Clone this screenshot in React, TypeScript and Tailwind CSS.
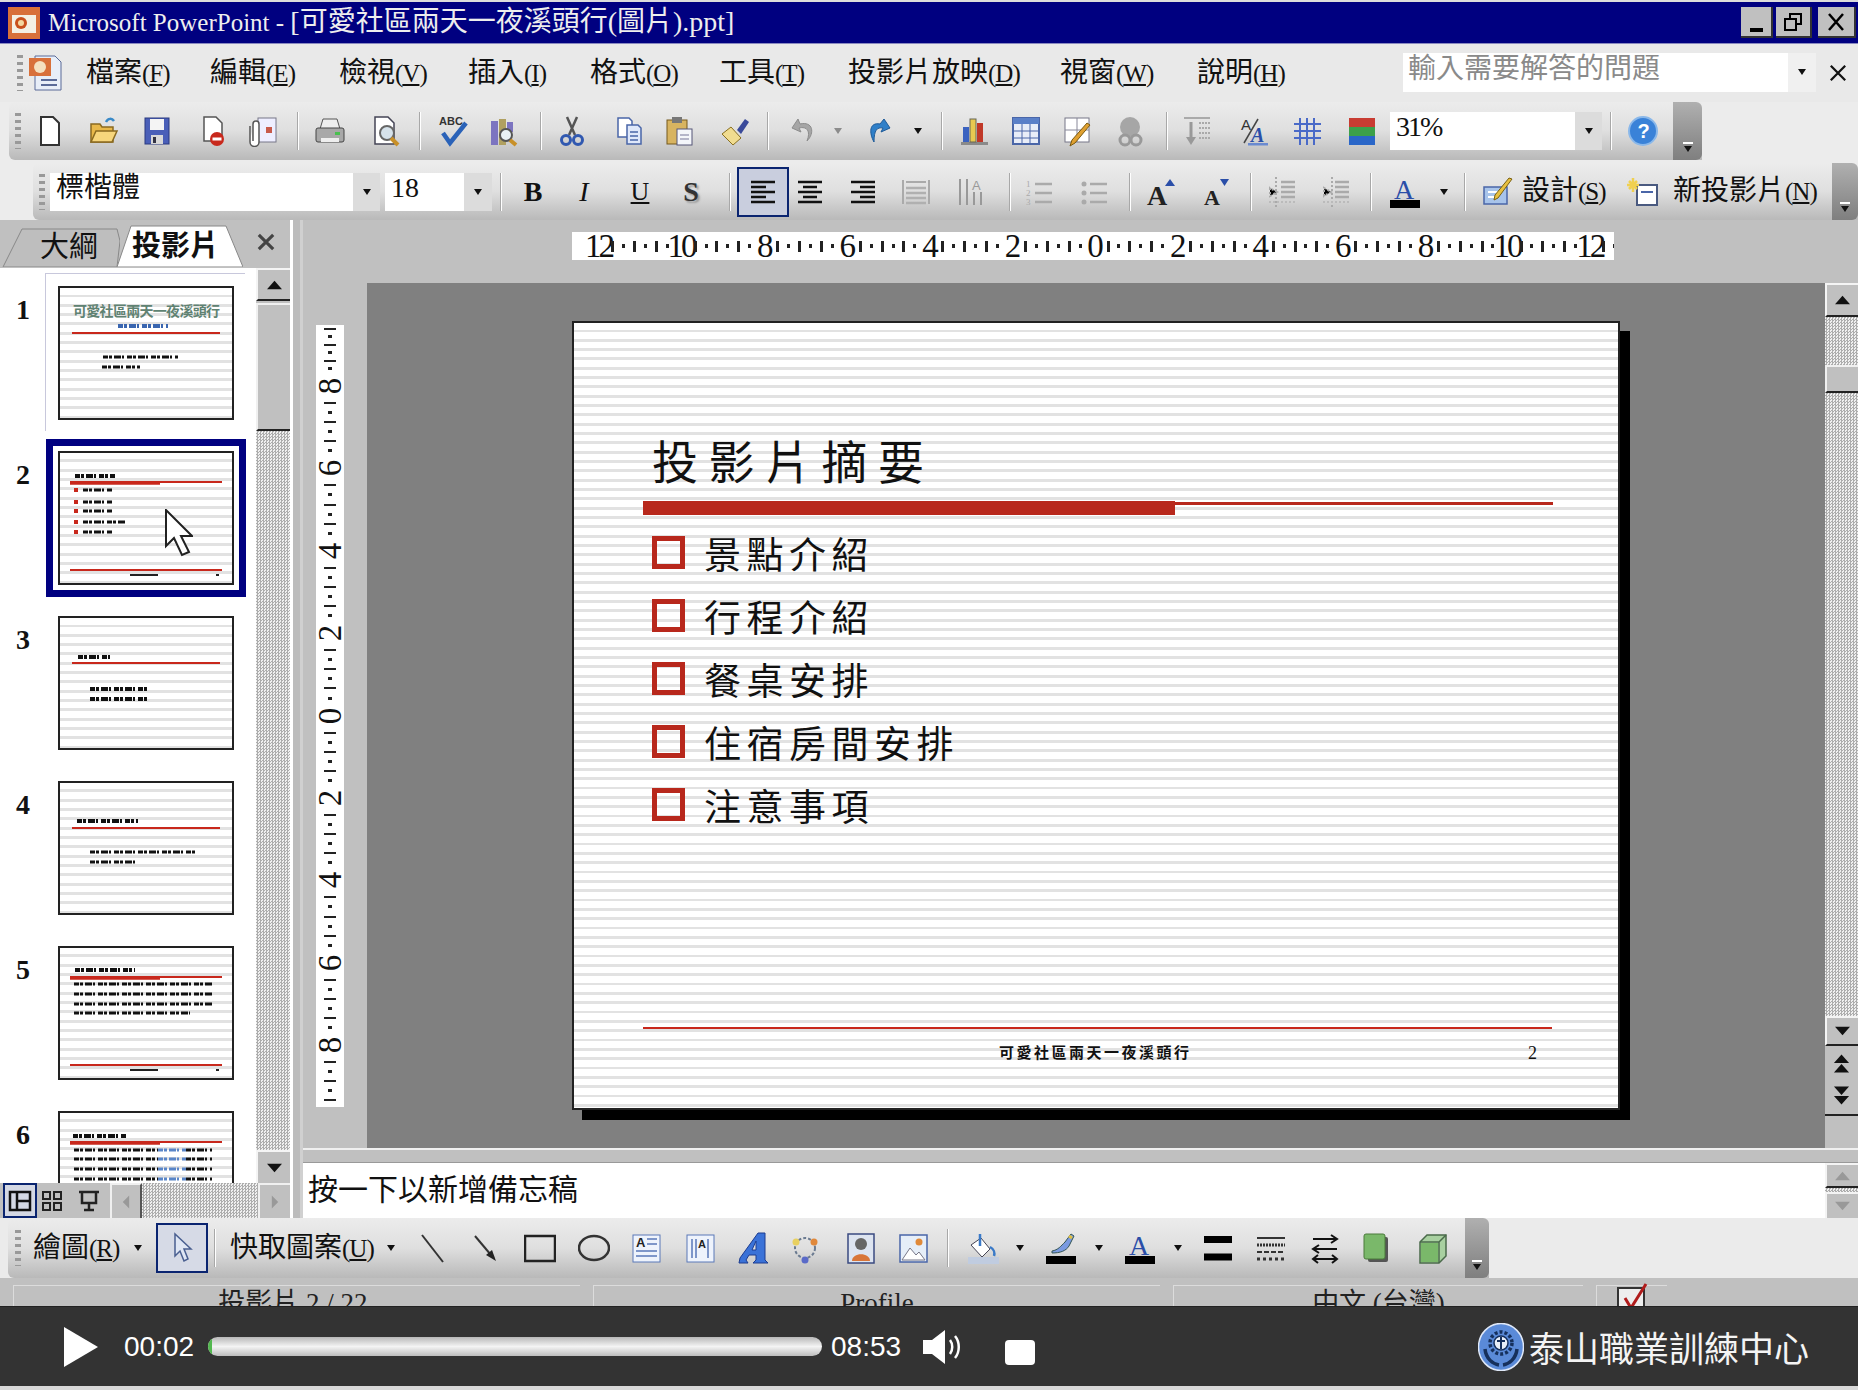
import React from "react";

// toolbar icons, all drawn on a 32x32 box
const G: Record<string, React.ReactNode> = {
  new: <path d="M7 2h12l6 6v22H7z" fill="#fff" stroke="#333" strokeWidth="2" />,
  open: <><path d="M3 27V9h9l2 3h11v15z" fill="#e8b84a" stroke="#8a6a20" strokeWidth="1.5" /><path d="M3 27l5-11h21l-5 11z" fill="#f7d67c" stroke="#8a6a20" strokeWidth="1.5" /><path d="M18 7c2-4 6-4 8-1" fill="none" stroke="#3a8ac8" strokeWidth="2.5" /></>,
  save: <><rect x="4" y="3" width="24" height="26" fill="#4a5fb8" stroke="#2a3a80" /><rect x="9" y="4" width="14" height="11" fill="#f4f4f4" /><rect x="10" y="20" width="12" height="9" fill="#d8d8d8" /><rect x="12" y="22" width="3" height="6" fill="#334" /></>,
  perm: <><path d="M7 2h12l6 6v18H7z" fill="#fff" stroke="#555" strokeWidth="1.5" /><circle cx="20" cy="24" r="7" fill="#c8281c" /><rect x="15.5" y="22.5" width="9" height="3" fill="#fff" /></>,
  mail: <><rect x="13" y="3" width="18" height="24" fill="#eef" stroke="#778" /><rect x="21" y="12" width="6" height="6" fill="#c85a4a" /><path d="M8 26V9a3 3 0 0 1 6 0v18a4 4 0 0 1-9 0V11" fill="#fff" stroke="#555" strokeWidth="1.5" /></>,
  print: <><path d="M9 4h14l3 10H6z" fill="#eee" stroke="#555" /><rect x="2" y="13" width="28" height="14" rx="2" fill="#a8a8a8" stroke="#444" /><rect x="7" y="23" width="18" height="4" fill="#eee" /><rect x="21" y="17" width="5" height="3" fill="#4ac050" /></>,
  preview: <><path d="M5 2h13l6 6v21H5z" fill="#fff" stroke="#445" strokeWidth="1.5" /><circle cx="17" cy="18" r="7" fill="#d6e2ea" stroke="#666" strokeWidth="2" /><path d="M21 23l7 7" stroke="#c89028" strokeWidth="4" /></>,
  spell: <><text x="1" y="10" fontSize="11" fontWeight="700" fill="#333" fontFamily="Liberation Sans">ABC</text><path d="M5 18l7 10L28 8" fill="none" stroke="#2a62b8" strokeWidth="4.5" /></>,
  research: <><rect x="3" y="6" width="7" height="24" fill="#7c74c0" /><rect x="11" y="4" width="7" height="26" fill="#b0a060" /><rect x="19" y="7" width="6" height="10" fill="#7c74c0" /><circle cx="18" cy="20" r="6" fill="#e8f0f4" stroke="#555" strokeWidth="2" /><path d="M22 25l6 5" stroke="#c89028" strokeWidth="4" /></>,
  cut: <><path d="M11 2l8 18M21 2l-8 18" stroke="#555" strokeWidth="2.5" /><circle cx="10" cy="25" r="4.5" fill="none" stroke="#3058b0" strokeWidth="3" /><circle cx="22" cy="25" r="4.5" fill="none" stroke="#3058b0" strokeWidth="3" /></>,
  copy: <><path d="M5 3h11l3 3v16H5z" fill="#fff" stroke="#4a66a8" strokeWidth="1.5" /><path d="M14 10h11l3 3v16H14z" fill="#dfe8fa" stroke="#4a66a8" strokeWidth="1.5" /><path d="M17 17h8M17 21h8M17 25h8" stroke="#4a66a8" strokeWidth="1.5" /></>,
  paste: <><rect x="4" y="5" width="20" height="24" fill="#d8b460" stroke="#75581c" /><rect x="9" y="2" width="10" height="6" fill="#777" /><rect x="14" y="14" width="15" height="16" fill="#f4f6fa" stroke="#557" /><path d="M17 20h9M17 24h9" stroke="#779" /></>,
  painter: <><path d="M3 19l9-7 10 11-8 7z" fill="#f0dc90" stroke="#8a7020" /><path d="M18 15l8-11 4 3-8 12z" fill="#3a4a9a" /></>,
  undo: <path d="M10 4L4 13l9 4-2-4c8-2 12 3 8 13 8-8 6-20-7-17z" fill="#a6a6a6" stroke="#8c8c8c" />,
  redo: <path d="M22 4l6 9-9 4 2-4c-6-1-9 2-9 14-5-9-5-20 6-18z" fill="#2f7fc8" stroke="#1e5a98" />,
  chart: <><rect x="3" y="27" width="27" height="3" fill="#8a8a8a" /><rect x="5" y="12" width="6" height="15" fill="#3a62c0" /><rect x="12" y="4" width="6" height="23" fill="#e8c850" stroke="#665" /><rect x="19" y="8" width="6" height="19" fill="#c03828" /></>,
  table: <><rect x="3" y="3" width="26" height="26" fill="#e8edf8" stroke="#4a66a8" strokeWidth="2" /><rect x="3" y="3" width="26" height="6" fill="#5a80c8" /><path d="M12 9v20M20 9v20M3 16h26M3 23h26" stroke="#4a66a8" /></>,
  drawtable: <><rect x="3" y="3" width="24" height="24" fill="#fff" stroke="#778" /><path d="M15 3v24M3 15h24" stroke="#889" /><path d="M28 10L13 28l-5 3 2-6L25 8z" fill="#e0a030" stroke="#7a5a10" /></>,
  hyper: <><circle cx="15" cy="12" r="10" fill="#a6a6a6" /><circle cx="10" cy="25" r="5" fill="none" stroke="#999" strokeWidth="3" /><circle cx="21" cy="25" r="5" fill="none" stroke="#999" strokeWidth="3" /></>,
  expand: <><path d="M1 3h26" stroke="#aaa" strokeWidth="2" /><path d="M8 7v18" stroke="#999" strokeWidth="3" /><path d="M3 22l5 8 5-8z" fill="#999" /><path d="M16 8h11M16 13h11M16 18h11M16 23h11" stroke="#aaa" strokeWidth="2" strokeDasharray="2 1" /></>,
  aa: <><text x="3" y="15" fontSize="15" fill="#333" fontFamily="Liberation Sans">A</text><path d="M6 28L20 4" stroke="#444" strokeWidth="1.5" /><text x="13" y="27" fontSize="20" fontWeight="700" fontStyle="italic" fill="#2a4ea8" fontFamily="Liberation Serif">A</text><rect x="10" y="28" width="20" height="2.5" fill="#6a8ad0" /></>,
  hash: <path d="M9 3v27M16 3v27M23 3v27M3 9h27M3 16h27M3 23h27" stroke="#4a6ac8" strokeWidth="2" />,
  color: <><rect x="4" y="3" width="26" height="9" fill="#c83c32" /><rect x="4" y="12" width="26" height="9" fill="#3ca04a" /><rect x="4" y="21" width="26" height="9" fill="#2a66c8" /></>,
  help: <><circle cx="16" cy="16" r="14" fill="#3a82d8" stroke="#8ab8ea" strokeWidth="2" /><text x="10.5" y="23" fontSize="20" fontWeight="700" fill="#fff" fontFamily="Liberation Sans">?</text></>,
  alignL: <path d="M4 6h24M4 11h15M4 16h24M4 21h15M4 26h24" stroke="#111" strokeWidth="2.5" />,
  alignC: <path d="M4 6h24M9 11h14M4 16h24M9 21h14M4 26h24" stroke="#111" strokeWidth="2.5" />,
  alignR: <path d="M4 6h24M13 11h15M4 16h24M13 21h15M4 26h24" stroke="#111" strokeWidth="2.5" />,
  dist: <><path d="M3 4v24M29 4v24" stroke="#aaa" strokeWidth="2" /><path d="M6 6h20" stroke="#aaa" strokeWidth="2" /><path d="M6 12h20M6 17h20M6 22h20M6 27h20" stroke="#b0b0b0" strokeWidth="2.5" /></>,
  vert: <><path d="M5 3v26M12 3v26M19 16v13M26 16v13" stroke="#999" strokeWidth="2" /><text x="17" y="14" fontSize="13" fill="#999" fontFamily="Liberation Sans">A</text></>,
  num: <><text x="3" y="11" fontSize="9" fill="#aaa">1</text><text x="3" y="20" fontSize="9" fill="#aaa">2</text><text x="3" y="29" fontSize="9" fill="#aaa">3</text><path d="M12 8h17M12 17h17M12 26h17" stroke="#aaa" strokeWidth="2.5" /></>,
  bul: <><circle cx="6" cy="8" r="2.5" fill="#aaa" /><circle cx="6" cy="17" r="2.5" fill="#aaa" /><circle cx="6" cy="26" r="2.5" fill="#aaa" /><path d="M12 8h17M12 17h17M12 26h17" stroke="#aaa" strokeWidth="2.5" /></>,
  aUp: <><text x="2" y="29" fontSize="28" fontWeight="700" fill="#222" fontFamily="Liberation Serif">A</text><path d="M25 3l5 7H20z" fill="#2a4ea8" /></>,
  aDown: <><text x="6" y="29" fontSize="22" fontWeight="700" fill="#222" fontFamily="Liberation Serif">A</text><path d="M22 3h9l-4.500 7z" fill="#2a4ea8" /></>,
  indL: <><path d="M14 6h14M14 11h14M14 16h14M14 21h14" stroke="#aaa" strokeWidth="2.5" /><path d="M10 16L3 12v8zM9 1v30" stroke="#aaa" strokeWidth="2" strokeDasharray="2 2" /><path d="M2 26h26" stroke="#bbb" strokeWidth="2" strokeDasharray="2 2" /></>,
  indR: <><path d="M14 6h14M14 11h14M14 16h14M14 21h14" stroke="#aaa" strokeWidth="2.5" /><path d="M3 12l7 4-7 4zM11 1v30" stroke="#aaa" strokeWidth="2" strokeDasharray="2 2" /><path d="M2 26h26" stroke="#bbb" strokeWidth="2" strokeDasharray="2 2" /></>,
  fontC: <><text x="5" y="23" fontSize="28" fill="#2a4ea8" fontFamily="Liberation Serif">A</text><rect x="1" y="24" width="30" height="8" fill="#000" /></>,
  design: <><rect x="2" y="11" width="23" height="17" fill="#a8c4ea" stroke="#4a66a8" strokeWidth="1.5" /><path d="M6 16h14M6 21h10" stroke="#fff" strokeWidth="2" /><path d="M30 3L16 22l-4 2 1-5L27 2z" fill="#e8c040" stroke="#7a6010" /></>,
  newS: <><rect x="10" y="9" width="20" height="20" fill="#fff" stroke="#4a5a80" strokeWidth="2" /><path d="M14 16h12" stroke="#4a66a8" strokeWidth="2" /><path d="M6 2v14M2 5l8 8M10 5l-8 8M0 9h12" stroke="#f0d050" strokeWidth="2.5" /></>,
  line: <path d="M5 3l21 27" stroke="#333" strokeWidth="2" />,
  arrow: <><path d="M5 4l16 19" stroke="#333" strokeWidth="2" /><path d="M26 29l-10-6 6-5z" fill="#222" /></>,
  rect: <rect x="1" y="4" width="30" height="25" fill="none" stroke="#222" strokeWidth="2.5" />,
  ellipse: <ellipse cx="16" cy="16" rx="15" ry="12" fill="none" stroke="#333" strokeWidth="2.5" />,
  textbox: <><rect x="3" y="3" width="27" height="27" fill="#eef3fc" stroke="#5a78b8" /><text x="6" y="15" fontSize="13" fontWeight="700" fill="#222" fontFamily="Liberation Sans">A</text><path d="M17 7h10M17 12h10M6 19h21M6 24h21" stroke="#5a78b8" strokeWidth="1.5" /></>,
  vtext: <><rect x="3" y="3" width="27" height="27" fill="#eef3fc" stroke="#5a78b8" /><path d="M8 7v19M12 7v19M24 7v19" stroke="#5a78b8" strokeWidth="1.5" /><text x="14" y="16" fontSize="11" fontWeight="700" fill="#222" fontFamily="Liberation Sans">A</text></>,
  word: <path d="M2 26L20 1h7v27l3 3H15l3-3v-5H11l-3 5 2 3H1zM14 18h4V9z" fill="#3a72d8" stroke="#1c3c90" fillRule="evenodd" />,
  diagram: <><g fill="none" stroke="#6a7a90" strokeWidth="2" strokeDasharray="3 2"><circle cx="16" cy="16" r="10" /></g><circle cx="7" cy="10" r="3.500" fill="#e8d060" /><circle cx="25" cy="10" r="3.500" fill="#e0883a" /><circle cx="16" cy="28" r="3.500" fill="#5a6ac8" /></>,
  clip: <><rect x="3" y="2" width="26" height="29" fill="#dde4f0" stroke="#3a4a80" strokeWidth="1.5" /><circle cx="16" cy="12" r="6" fill="#666" /><path d="M7 29c0-9 18-9 18 0z" fill="#d8763a" /></>,
  pic: <><rect x="3" y="3" width="27" height="27" fill="#e6eef8" stroke="#4a66a8" strokeWidth="1.5" /><path d="M5 28l8-12 6 7 3-3 6 8z" fill="#fff" stroke="#778" /><circle cx="22" cy="10" r="3.500" fill="#e08a3a" /></>,
  fill: <><rect x="1" y="25" width="31" height="7" fill="#c0cce0" /><path d="M4 13l10-7 9 11-8 8z" fill="#fff" stroke="#445" /><path d="M13 2v12M23 15c4 2 5 6 4 9" fill="none" stroke="#3a7ac8" strokeWidth="2.5" /></>,
  lineC: <><path d="M7 19c6-1 9-5 13-9l6-8 3 2-5 10c-3 5-9 7-17 7z" fill="#7a9ae0" stroke="#355" strokeWidth="1" /><path d="M24 4l3 2" stroke="#e0c040" strokeWidth="3" /><rect x="1" y="24" width="30" height="8" fill="#000" /></>,
  lineS: <path d="M2 7.500h28M2 25h28" stroke="#000" strokeWidth="7" />,
  dash: <><path d="M2 6h28" stroke="#333" strokeWidth="2" /><path d="M2 13h28" stroke="#333" strokeWidth="3" strokeDasharray="2 1" /><path d="M2 20h28" stroke="#333" strokeWidth="2" strokeDasharray="5 2" /><path d="M2 27h28" stroke="#333" strokeWidth="3" strokeDasharray="3 3" /></>,
  arrows: <path d="M4 7h23m-5-4l6 4-6 4M28 17H5m5-4l-6 4 6 4M4 27h24M9 23l-5 4 5 4M23 23l5 4-5 4" fill="none" stroke="#111" strokeWidth="2" />,
  shadow: <><rect x="9" y="5" width="20" height="25" rx="2" fill="#555" /><rect x="5" y="2" width="21" height="25" rx="2" fill="#7ab86a" stroke="#4a7a3a" /></>,
  cube: <><path d="M3 10L10 3h19v21l-7 7H3z" fill="#a8d0a0" stroke="#4a6a4a" strokeWidth="1.5" /><path d="M3 10h19v21M22 10l7-7" fill="none" stroke="#4a6a4a" strokeWidth="1.5" /><rect x="4" y="11" width="17" height="19" fill="#7ab86a" /></>,
  pointer: <path d="M9 2v22l5-5 4 10 4-2-4-10h7z" fill="#dfe6f4" stroke="#4a5f90" strokeWidth="1.5" />,
};

function Ic({ n, c = "" }: { n: string; c?: string }) {
  return (
    <svg viewBox="0 0 32 32" className={"w-8 h-8 shrink-0 " + c}>
      {G[n]}
    </svg>
  );
}

const Sep = ({ c = "" }: { c?: string }) => <div className={"w-[2px] h-[38px] shrink-0 bg-[#a8a8a8] border-r border-white " + c} />;
const Grip = ({ c = "" }: { c?: string }) => (
  <div className={"w-[6px] h-[36px] shrink-0 bg-[repeating-linear-gradient(180deg,#999_0,#999_3px,transparent_3px,transparent_7px)] " + c} />
);
const Drop = ({ c = "" }: { c?: string }) => (
  <svg viewBox="0 0 8 6" className={"w-2 h-[6px] shrink-0 " + c}>
    <path d="M0 0h8L4 6z" fill="#111" />
  </svg>
);

function Handle({ c = "" }: { c?: string }) {
  return (
    <div className={"self-stretch shrink-0 rounded-r-md bg-gradient-to-b from-[#b0b0b0] to-[#7f7f7f] flex flex-col items-center justify-end pb-2 " + c}>
      <div className="w-[10px] h-[2px] bg-white mb-[2px]" />
      <Drop c="w-[10px]" />
    </div>
  );
}

function Combo({ children, c, drop = "w-[27px]" }: { children: React.ReactNode; c: string; drop?: string }) {
  return (
    <div className={"h-[38px] shrink-0 flex bg-white " + c}>
      <div className="flex-1 pl-[6px] text-[28px] leading-[30px] whitespace-nowrap">{children}</div>
      <div className={"flex items-center justify-center bg-[#dcdcdc] " + drop}>
        <Drop />
      </div>
    </div>
  );
}

function Label({ t, k, c = "" }: { t: string; k: string; c?: string }) {
  return (
    <div className={"shrink-0 whitespace-nowrap text-[28px] leading-[34px] text-[#111] " + c}>
      {t}
      <span className="text-[25px] tracking-[-1px]">
        (<u>{k}</u>)
      </span>
    </div>
  );
}

const TOOLBAR = "flex items-center bg-gradient-to-b from-[#ececec] via-[#dfdfdf] to-[#b9b9b9] rounded-l-md";

function TitleBar() {
  return (
    <div className="h-[44px] shrink-0 flex items-center bg-[#000080] border-t-2 border-[#dcdcdc] border-b-1 border-b-[#8a8ac0]">
      <svg viewBox="0 0 32 32" className="w-8 h-8 ml-2 shrink-0">
        <rect width="32" height="32" fill="#d8703a" />
        <rect x="4" y="8" width="24" height="18" fill="#f4f0e4" />
        <circle cx="13" cy="16" r="6" fill="#c8501c" />
        <circle cx="13" cy="16" r="3" fill="#f4d8a0" />
      </svg>
      <div className="ml-2 text-[25px] leading-[30px] text-[#eeeeee] whitespace-nowrap">
        Microsoft PowerPoint - <span className="text-[28px]">[可愛社區兩天一夜溪頭行(圖片).ppt]</span>
      </div>
      <div className="ml-auto mr-[2px] flex">
        <div className="w-8 h-[31px] bg-[#c0c0c0] border-r-2 border-b-2 border-[#333] flex items-end justify-center pb-1"><div className="w-[13px] h-[4px] bg-black" /></div>
        <div className="w-9 h-[31px] ml-[3px] bg-[#c0c0c0] border-r-2 border-b-2 border-[#333] flex items-center justify-center">
          <svg viewBox="0 0 20 20" className="w-5 h-5"><path d="M7 6V2h11v10h-4M2 7h11v11H2zM2 7h11" fill="none" stroke="#000" strokeWidth="2" /></svg>
        </div>
        <div className="w-[38px] h-[31px] ml-[6px] bg-[#c0c0c0] border-r-2 border-b-2 border-[#333] flex items-center justify-center">
          <svg viewBox="0 0 20 20" className="w-5 h-5"><path d="M3 2l14 16M17 2L3 18" stroke="#000" strokeWidth="2.5" /></svg>
        </div>
      </div>
    </div>
  );
}

function MenuBar() {
  return (
    <div className="h-[58px] shrink-0 flex items-center bg-[#e9e9e9]">
      <Grip c="ml-[17px]" />
      <svg viewBox="0 0 38 36" className="w-[38px] h-9 ml-1 shrink-0">
        <path d="M8 1h20l6 6v28H8z" fill="#e8eef8" stroke="#5a6a98" />
        <rect x="2" y="3" width="22" height="18" fill="#d8703a" />
        <circle cx="13" cy="12" r="6" fill="#f4e0c0" />
        <path d="M14 25h16M14 30h16" stroke="#5a6a98" strokeWidth="2" />
      </svg>
      <Label t="檔案" k="F" c="w-[124px] ml-[21px]" />
      <Label t="編輯" k="E" c="w-[129px]" />
      <Label t="檢視" k="V" c="w-[129px]" />
      <Label t="插入" k="I" c="w-[122px]" />
      <Label t="格式" k="O" c="w-[129px]" />
      <Label t="工具" k="T" c="w-[129px]" />
      <Label t="投影片放映" k="D" c="w-[212px]" />
      <Label t="視窗" k="W" c="w-[137px]" />
      <Label t="說明" k="H" c="w-[206px]" />
      <div className="w-[413px] h-[39px] shrink-0 flex bg-white -mt-[2px]">
        <div className="flex-1 pl-[5px] text-[28px] leading-[32px] text-[#8a8a8a]">輸入需要解答的問題</div>
        <div className="w-7 flex items-center justify-center bg-[#f0f0f0]"><Drop /></div>
      </div>
      <svg viewBox="0 0 20 20" className="w-[18px] h-[18px] ml-[13px]"><path d="M2 2l16 16M18 2L2 18" stroke="#111" strokeWidth="2.5" /></svg>
    </div>
  );
}

function StandardBar() {
  return (
    <div className="h-[58px] shrink-0 flex bg-[#ececec] pl-[9px]">
      <div className={TOOLBAR + " pl-[6px]"}>
        <Grip />
        <Ic n="new" c="ml-[13px]" />
        <Ic n="open" c="ml-[22px]" />
        <Ic n="save" c="ml-[21px]" />
        <Ic n="perm" c="ml-[24px]" />
        <Ic n="mail" c="ml-[16px]" />
        <Sep c="ml-[20px]" />
        <Ic n="print" c="ml-[15px]" />
        <Ic n="preview" c="ml-[24px]" />
        <Sep c="ml-[17px]" />
        <Ic n="spell" c="ml-[17px]" />
        <Ic n="research" c="ml-[18px]" />
        <Sep c="ml-[20px]" />
        <Ic n="cut" c="ml-[14px]" />
        <Ic n="copy" c="ml-[25px]" />
        <Ic n="paste" c="ml-[18px]" />
        <Ic n="painter" c="ml-[24px]" />
        <Sep c="ml-[16px]" />
        <Ic n="undo" c="ml-[19px]" />
        <Drop c="ml-[14px] opacity-40" />
        <Ic n="redo" c="ml-[20px]" />
        <Drop c="ml-[20px]" />
        <Sep c="ml-[19px]" />
        <Ic n="chart" c="ml-[15px]" />
        <Ic n="table" c="ml-[20px]" />
        <Ic n="drawtable" c="ml-[20px]" />
        <Ic n="hyper" c="ml-[21px]" />
        <Sep c="ml-[19px]" />
        <Ic n="expand" c="ml-[15px]" />
        <Ic n="aa" c="ml-[23px]" />
        <Ic n="hash" c="ml-[21px]" />
        <Ic n="color" c="ml-[22px]" />
        <Combo c="w-[212px] ml-[13px]"><span className="tracking-[-2px]">31%</span></Combo>
        <Sep c="ml-2" />
        <Ic n="help" c="ml-[15px]" />
        <Handle c="w-[29px] ml-[14px]" />
      </div>
    </div>
  );
}

function FormatBar() {
  return (
    <div className="h-[60px] shrink-0 flex items-end bg-[#ececec] pl-[33px]">
      <div className={TOOLBAR + " h-[57px] pl-[6px] flex-1"}>
        <Grip />
        <Combo c="w-[330px] ml-[5px]">標楷體</Combo>
        <Combo c="w-[107px] ml-[5px]" drop="w-7">18</Combo>
        <Sep c="ml-2" />
        <div className="w-8 ml-[15px] text-center text-[28px] font-bold font-['Liberation_Serif',serif]">B</div>
        <div className="w-8 ml-[19px] text-center text-[28px] italic font-['Liberation_Serif',serif]">I</div>
        <div className="w-8 ml-[24px] text-center text-[26px] underline font-['Liberation_Serif',serif]">U</div>
        <div className="w-8 ml-[19px] text-center text-[28px] font-bold text-[#333] [text-shadow:2px_2px_2px_#999] font-['Liberation_Serif',serif]">S</div>
        <Sep c="ml-[22px]" />
        <div className="w-[52px] h-[50px] ml-[6px] shrink-0 flex items-center justify-center bg-[#c9cede] border-2 border-[#0a2470]">
          <Ic n="alignL" />
        </div>
        <Ic n="alignC" c="ml-[5px]" />
        <Ic n="alignR" c="ml-[21px]" />
        <Ic n="dist" c="ml-[21px]" />
        <Ic n="vert" c="ml-[23px]" />
        <Sep c="ml-[22px]" />
        <Ic n="num" c="ml-3" />
        <Ic n="bul" c="ml-[23px]" />
        <Sep c="ml-[19px]" />
        <Ic n="aUp" c="ml-[14px]" />
        <Ic n="aDown" c="ml-[21px]" />
        <Sep c="ml-5" />
        <Ic n="indL" c="ml-[15px]" />
        <Ic n="indR" c="ml-[22px]" />
        <Sep c="ml-[17px]" />
        <Ic n="fontC" c="ml-[17px]" />
        <Drop c="ml-[19px]" />
        <Sep c="ml-4" />
        <Ic n="design" c="ml-4" />
        <Label t="設計" k="S" c="w-[88px] ml-2" />
        <Ic n="newS" c="ml-[17px]" />
        <Label t="新投影片" k="N" c="w-[145px] ml-[14px]" />
        <Handle c="w-[26px] ml-auto" />
      </div>
    </div>
  );
}

// tiny unreadable lines of text in the thumbnails
const Dash = ({ x, to, y, color = "#111", w = 3 }: { x: number; to: number; y: number; color?: string; w?: number }) => (
  <line x1={x} x2={to} y1={y} y2={y} stroke={color} strokeWidth={w} strokeDasharray="5 1 3 2 7 1 2 3" />
);
const Red = ({ y, x = 14, to = 162 }: { y: number; x?: number; to?: number }) => <line x1={x} x2={to} y1={y} y2={y} stroke="#c8281c" strokeWidth="2" />;
const Heavy = () => (
  <>
    <Red y={31} x={12} to={164} />
    <line x1={12} x2={102} y1={32} y2={32} stroke="#c8281c" strokeWidth="3.500" />
  </>
);
const Foot = () => (
  <>
    <Red y={119} x={12} to={164} />
    <line x1={72} x2={100} y1={124} y2={124} stroke="#222" strokeWidth="2" />
    <rect x={158} y={123} width={3} height={2} fill="#222" />
  </>
);

const THUMBS: React.ReactNode[] = [
  <>
    <text x="15" y="30" fontSize="14" textLength="147" fill="#5f8272" fontFamily="Noto Sans CJK TC" fontWeight="700">可愛社區兩天一夜溪頭行</text>
    <Dash x={60} to={110} y={40} color="#3a66b0" w={4} />
    <Red y={47} />
    <Dash x={45} to={120} y={71} />
    <Dash x={44} to={82} y={81} />
  </>,
  <>
    <Dash x={17} to={57} y={25} w={4} />
    <Heavy />
    {[39, 51, 60, 71, 81].map((y, i) => (
      <g key={y}>
        <rect x={16} y={y - 2} width={4} height={4} fill="#c8281c" />
        <Dash x={25} to={i === 3 ? 67 : 54} y={y} />
      </g>
    ))}
    <Foot />
  </>,
  <>
    <Dash x={20} to={52} y={41} w={4} />
    <Red y={47} />
    <Dash x={32} to={89} y={73} w={4} />
    <Dash x={32} to={89} y={83} w={4} />
  </>,
  <>
    <Dash x={19} to={80} y={40} w={4} />
    <Red y={47} />
    <Dash x={32} to={137} y={71} />
    <Dash x={32} to={77} y={81} />
  </>,
  <>
    <Dash x={17} to={77} y={24} w={4} />
    <Heavy />
    <Dash x={16} to={154} y={38} />
    <Dash x={16} to={154} y={48} />
    <Dash x={16} to={154} y={58} />
    <Dash x={16} to={132} y={67} />
    <Foot />
  </>,
  <>
    <Dash x={15} to={68} y={25} w={4} />
    <Heavy />
    {[39, 48, 58, 68].map((y) => (
      <g key={y}>
        <Dash x={16} to={100} y={y} />
        <Dash x={100} to={128} y={y} color="#5a86c8" />
        <Dash x={128} to={154} y={y} />
      </g>
    ))}
  </>,
];

const STRIPES = "bg-[repeating-linear-gradient(180deg,#fff_0,#fff_6.5px,#e2e2e2_6.5px,#e2e2e2_9.33px)]";
const DITHER = "bg-[repeating-conic-gradient(#adadad_0_25%,#f0f0f0_0_50%)] bg-[length:3px_3px]";

function Thumb({ i }: { i: number }) {
  const selected = i === 1;
  return (
    <div className="flex mb-[7px] h-[158px] shrink-0">
      <div className="w-[46px] pt-[20px] text-center text-[28px] leading-[32px] font-bold text-[#111]">{i + 1}</div>
      <div
        className={
          "relative w-[200px] h-[158px] p-[5px] border-[7px] " +
          (selected ? "border-[#000080]" : "border-transparent") +
          (i === 0 ? " shadow-[-1px_-1px_0_#c8c8dc]" : "")
        }
      >
        <div className={"w-[176px] h-[134px] border-2 border-[#222] overflow-hidden " + STRIPES}>
          <svg viewBox="2 2 172 130" className="w-full h-full">{THUMBS[i]}</svg>
        </div>
        {selected && (
          <svg viewBox="0 0 28 48" className="absolute left-[112px] top-[63px] w-[28px] h-[48px]">
            <path d="M1 1v36l8-8 8 17 7-3-8-16h11z" fill="#fff" stroke="#222" strokeWidth="2" />
          </svg>
        )}
      </div>
    </div>
  );
}

const ScrollBtn = ({ d, c = "", fill = "#111" }: { d: string; c?: string; fill?: string }) => (
  <div className={"shrink-0 flex items-center justify-center bg-[#c0c0c0] border-t-2 border-l-2 border-[#f4f4f4] " + c}>
    <svg viewBox="0 0 20 12" className="w-[17px] h-[10px]">
      <path d={d} fill={fill} />
    </svg>
  </div>
);
const UP = "M10 1l9 10H1z";
const DOWN = "M1 1h18l-9 10z";

function LeftPane() {
  return (
    <div className="w-[290px] shrink-0 flex flex-col bg-[#c0c0c0]">
      <div className="relative h-[48px] shrink-0 flex items-end pb-[1px]">
        <div className="relative w-[118px] h-[39px] ml-[2px] shrink-0 text-center text-[29px] leading-[38px] pl-4 text-[#111]">
          <svg viewBox="0 0 118 39" className="absolute inset-0 w-full h-full">
            <path d="M1 39L20 1h95l3 12-3 26z" fill="#bebebe" stroke="#888" />
          </svg>
          <span className="relative">大綱</span>
        </div>
        <div className="relative w-[126px] h-[42px] -ml-[3px] shrink-0 text-[29px] leading-[42px] pl-[15px] font-bold text-[#111]">
          <svg viewBox="0 0 126 42" className="absolute inset-0 w-full h-full">
            <path d="M0 42L14 1h95l17 41z" fill="#fff" stroke="#888" />
          </svg>
          <span className="relative">投影片</span>
        </div>
        <svg viewBox="0 0 20 20" className="w-[18px] h-[18px] ml-[14px] mb-[16px]">
          <path d="M2 2l16 16M18 2L2 18" stroke="#444" strokeWidth="3.500" />
        </svg>
      </div>
      <div className="h-[915px] shrink-0 flex">
        <div className="w-[256px] shrink-0 bg-white overflow-hidden pt-[6px] flex flex-col">
          {THUMBS.map((_, i) => (
            <Thumb key={i} i={i} />
          ))}
        </div>
        <div className="w-[34px] shrink-0 flex flex-col">
          <ScrollBtn d={UP} c="h-[33px] border-b-2 border-b-[#222]" />
          <div className="h-[128px] mt-[2px] shrink-0 bg-[#c0c0c0] border-t-2 border-l-2 border-[#f0f0f0] border-b-2 border-b-[#222]" />
          <div className={"flex-1 " + DITHER} />
          <ScrollBtn d={DOWN} c="h-[33px]" />
        </div>
      </div>
      <div className="h-[35px] shrink-0 flex items-center">
        <div className="w-[34px] h-[35px] ml-[3px] shrink-0 border-2 border-[#0a2470] bg-[#d4d8e4] flex items-center justify-center">
          <svg viewBox="0 0 24 24" className="w-6 h-6"><path d="M2 3h20v18H2zM9 3v18M9 12h13" fill="none" stroke="#111" strokeWidth="2.500" /></svg>
        </div>
        <svg viewBox="0 0 24 24" className="w-6 h-6 ml-[3px] shrink-0"><path d="M3 3h7v7H3zM14 3h7v7h-7zM3 14h7v7H3zM14 14h7v7h-7z" fill="none" stroke="#222" strokeWidth="2" /></svg>
        <svg viewBox="0 0 24 24" className="w-6 h-6 ml-[13px] shrink-0"><path d="M2 3h20M5 3v11h14V3M12 14v6M7 21h10" fill="none" stroke="#222" strokeWidth="2.500" /></svg>
        <div className="w-8 h-[35px] ml-[9px] shrink-0 bg-[#c0c0c0] border-t-2 border-l-2 border-[#f0f0f0] border-r-2 border-r-[#555] flex items-center justify-center">
          <svg viewBox="0 0 10 18" className="w-[8px] h-4"><path d="M9 1v16L1 9z" fill="#999" /></svg>
        </div>
        <div className={"w-[116px] h-[35px] shrink-0 " + DITHER} />
        <div className="w-8 h-[35px] shrink-0 bg-[#c0c0c0] border-t-2 border-l-2 border-[#f0f0f0] flex items-center justify-center">
          <svg viewBox="0 0 10 18" className="w-[8px] h-4"><path d="M1 1v16l8-8z" fill="#999" /></svg>
        </div>
      </div>
    </div>
  );
}

const RULER_H = ["12", "10", "8", "6", "4", "2", "0", "2", "4", "6", "8", "10", "12"];
const RULER_V = ["8", "6", "4", "2", "0", "2", "4", "6", "8"];
const BAR_H = <div className="w-[3px] h-[11px] bg-[#222]" />;
const DOT_H = <div className="w-[3px] h-[4px] bg-[#222]" />;
const BAR_V = <div className="w-[12px] h-[2px] bg-[#222]" />;
const DOT_V = <div className="w-[4px] h-[3px] bg-[#222]" />;

const MarksH = () => (
  <div className="flex-1 flex items-center justify-between -mx-[1px]">
    {BAR_H}{DOT_H}{BAR_H}{DOT_H}{BAR_H}{DOT_H}
  </div>
);
const MarksV = () => (
  <div className="flex-1 flex flex-col items-center justify-between py-[3px]">
    {BAR_V}{DOT_V}{BAR_V}{DOT_V}{BAR_V}{DOT_V}
  </div>
);

function Slide() {
  const rows = ["景點介紹", "行程介紹", "餐桌安排", "住宿房間安排", "注意事項"];
  return (
    <div className={"w-[1048px] h-[789px] shrink-0 flex flex-col border-2 border-[#222] shadow-[10px_10px_0_#000] " + STRIPES}>
      <div className="ml-[78px] mt-[109px] h-[64px] text-[46px] leading-[64px] tracking-[10.500px] text-[#111] whitespace-nowrap">投影片摘要</div>
      <div className="ml-[69px] mt-[5px] flex items-start">
        <div className="w-[532px] h-[14px] bg-[#b8281c]" />
        <div className="w-[378px] h-[3px] mt-[1px] bg-[#b8281c]" />
      </div>
      <div className="mt-[21px] ml-[78px] flex flex-col">
        {rows.map((r) => (
          <div key={r} className="h-[63px] flex items-start">
            <div className="w-[33px] h-[33px] shrink-0 border-[5px] border-[#b8281c]" />
            <div className="ml-[19px] -mt-[1px] text-[37px] leading-[44px] tracking-[5.500px] text-[#111] whitespace-nowrap">{r}</div>
          </div>
        ))}
      </div>
      <div className="mt-auto ml-[69px] w-[909px] h-[2px] bg-[#c8281c]" />
      <div className="h-[53px] flex items-start pt-[14px] ml-[425px] mb-[26px]">
        <div className="w-[193px] text-[15px] leading-[20px] font-bold text-[#111] tracking-[2.500px] whitespace-nowrap">可愛社區兩天一夜溪頭行</div>
        <div className="ml-[336px] text-[18px] leading-[20px] text-[#111]">2</div>
      </div>
    </div>
  );
}

function SlideArea() {
  return (
    <div className="flex-1 flex flex-col min-w-0">
      <div className="h-[63px] shrink-0 pl-[269px] pt-[12px] bg-[#c0c0c0]">
        <div className="w-[1042px] h-[28px] pl-[13px] flex bg-white overflow-hidden">
          {RULER_H.map((n, i) => (
            <div key={i} className="w-[82.6px] shrink-0 flex items-center">
              <span className="w-[27px] shrink-0 text-center text-[33px] leading-[28px] tracking-[-3px] text-[#111]">{n}</span>
              <MarksH />
            </div>
          ))}
        </div>
      </div>
      <div className="h-[865px] shrink-0 flex">
        <div className="w-[64px] shrink-0 bg-[#c0c0c0] pl-[13px] pt-[42px]">
          <div className="w-[28px] h-[782px] flex flex-col bg-white overflow-hidden">
            <div className="h-[48px] shrink-0 flex flex-col"><MarksV /></div>
            {RULER_V.map((n, i) => (
              <div key={i} className="h-[82.4px] shrink-0 flex flex-col items-center">
                <span className="h-[26px] shrink-0 -rotate-90 text-[33px] leading-[26px] text-[#111]">{n}</span>
                <MarksV />
              </div>
            ))}
          </div>
        </div>
        <div className="w-[1458px] shrink-0 bg-[#808080] pl-[205px] pt-[38px]">
          <Slide />
        </div>
        <div className="w-[33px] shrink-0 flex flex-col bg-[#c0c0c0]">
          <ScrollBtn d={UP} c="h-[34px] border-b-2 border-b-[#222]" />
          <div className={"h-[48px] " + DITHER} />
          <div className="h-[28px] shrink-0 bg-[#c0c0c0] border-t-2 border-l-2 border-[#f0f0f0] border-b-2 border-b-[#222]" />
          <div className={"flex-1 " + DITHER} />
          <ScrollBtn d={DOWN} c="h-[30px] border-b-2 border-b-[#222]" />
          <div className="h-[70px] shrink-0 flex flex-col items-center justify-center gap-[12px] border-b-2 border-[#222]">
            <svg viewBox="0 0 18 20" className="w-[17px] h-[20px]"><path d="M9 0l8 9H1zM9 10l8 9H1z" fill="#111" /></svg>
            <svg viewBox="0 0 18 20" className="w-[17px] h-[20px]"><path d="M1 0h16L9 9zM1 10h16l-8 9z" fill="#111" /></svg>
          </div>
          <div className="h-[32px] shrink-0" />
        </div>
      </div>
      <div className="h-[15px] shrink-0 bg-[#c0c0c0] border-t-2 border-[#f0f0f0] border-b-1 border-b-[#999]" />
      <div className="h-[55px] shrink-0 flex">
        <div className="flex-1 bg-white pl-[5px] text-[30px] leading-[53px] text-[#111] whitespace-nowrap">按一下以新增備忘稿</div>
        <div className="w-[33px] shrink-0 flex flex-col bg-[#c0c0c0]">
          <ScrollBtn d={UP} fill="#999" c="h-[25px] border-b-2 border-b-[#222]" />
          <div className={"h-[4px] " + DITHER} />
          <ScrollBtn d={DOWN} fill="#999" c="h-[26px]" />
        </div>
      </div>
    </div>
  );
}

function DrawBar() {
  return (
    <div className="h-[60px] shrink-0 flex bg-[#ebebeb] pl-2">
      <div className={TOOLBAR}>
        <Grip c="ml-[7px]" />
        <Label t="繪圖" k="R" c="w-[89px] ml-3" />
        <Drop c="ml-3" />
        <div className="w-[52px] h-[50px] ml-[14px] shrink-0 flex items-center justify-center bg-[#d6dae6] border-2 border-[#0a2470]">
          <Ic n="pointer" />
        </div>
        <Sep c="ml-[6px]" />
        <Label t="快取圖案" k="U" c="w-[147px] ml-[14px]" />
        <Drop c="ml-[10px]" />
        <Ic n="line" c="ml-[22px]" />
        <Ic n="arrow" c="ml-[21px]" />
        <Ic n="rect" c="ml-[22px]" />
        <Ic n="ellipse" c="ml-[22px]" />
        <Ic n="textbox" c="ml-5" />
        <Ic n="vtext" c="ml-[22px]" />
        <Ic n="word" c="ml-[22px]" />
        <Ic n="diagram" c="ml-[19px]" />
        <Ic n="clip" c="ml-6" />
        <Ic n="pic" c="ml-5" />
        <Sep c="ml-[18px]" />
        <Ic n="fill" c="ml-[18px]" />
        <Drop c="ml-[17px]" />
        <Ic n="lineC" c="ml-[21px]" />
        <Drop c="ml-[18px]" />
        <Ic n="fontC" c="ml-[21px]" />
        <Drop c="ml-[18px]" />
        <Ic n="lineS" c="ml-5" />
        <Ic n="dash" c="ml-[21px]" />
        <Ic n="arrows" c="ml-[22px]" />
        <Ic n="shadow" c="ml-[18px]" />
        <Ic n="cube" c="ml-[26px]" />
        <Handle c="w-6 ml-4" />
      </div>
    </div>
  );
}

function StatusBar() {
  const cell = "h-[40px] shrink-0 text-center text-[27px] leading-[34px] border-t-1 border-l-1 border-[#dcdcdc] text-[#222]";
  return (
    <div className="h-[28px] shrink-0 flex overflow-hidden bg-[#c0c0c0] pt-[7px] pl-[13px]">
      <div className={cell + " w-[567px] pr-[8px]"}>投影片 2 / 22</div>
      <div className={cell + " w-[567px] ml-[13px]"}>Profile</div>
      <div className={cell + " w-[410px] ml-[13px]"}>中文 (台灣)</div>
      <div className={cell + " w-[71px] ml-[13px] flex justify-center"}>
        <svg viewBox="0 0 40 30" className="w-10 h-[30px] -mt-1">
          <path d="M6 6h26v24H6z" fill="#eee" stroke="#333" strokeWidth="2" />
          <path d="M13 16l6 10L34 2" fill="none" stroke="#b01c1c" strokeWidth="3" />
        </svg>
      </div>
    </div>
  );
}

function Player() {
  return (
    <div className="h-[80px] shrink-0 flex items-center bg-[#333333] border-t-1 border-[#222] font-['Liberation_Sans','Noto_Sans_CJK_TC',sans-serif] text-white">
      <svg viewBox="0 0 34 40" className="w-[34px] h-10 ml-[64px] shrink-0">
        <path d="M0 0l34 20L0 40z" fill="#fff" />
      </svg>
      <div className="ml-[26px] w-[71px] shrink-0 text-[28px] leading-[34px]">00:02</div>
      <div className="ml-[13px] w-[614px] h-[19px] shrink-0 rounded-full bg-gradient-to-b from-[#b8b8b8] via-[#f4f4f4] to-[#bdbdbd] overflow-hidden">
        <div className="w-[4px] h-full bg-[#53b84f]" />
      </div>
      <div className="ml-[9px] w-[71px] shrink-0 text-[28px] leading-[34px]">08:53</div>
      <svg viewBox="0 0 40 36" className="w-10 h-9 ml-[21px] shrink-0">
        <path d="M0 11h9L22 1v34L9 25H0z" fill="#fff" />
        <path d="M27 11c3 4 3 10 0 14M32 7c5 6 5 16 0 22" fill="none" stroke="#fff" strokeWidth="2.500" />
      </svg>
      <div className="w-[30px] h-[25px] ml-[42px] mt-[12px] shrink-0 rounded-[4px] bg-white" />
      <svg viewBox="0 0 46 48" className="w-[46px] h-12 ml-[443px] shrink-0">
        <ellipse cx="23" cy="24" rx="22.500" ry="23.500" fill="#5a8ad8" stroke="#dfe8f8" strokeWidth="1.500" />
        <circle cx="23" cy="20" r="11" fill="none" stroke="#16305c" strokeWidth="3.500" strokeDasharray="3 2" />
        <circle cx="23" cy="20" r="7" fill="#e8eef8" stroke="#16305c" strokeWidth="1.500" />
        <path d="M23 14v12M19 18h8" stroke="#16305c" strokeWidth="2" />
        <path d="M7 26c1 10 8 15 14 16M39 26c-1 10-8 15-14 16" fill="none" stroke="#16305c" strokeWidth="3.500" />
      </svg>
      <div className="ml-[5px] mt-[6px] text-[35px] leading-[44px] whitespace-nowrap text-[#f4f4f4]">泰山職業訓練中心</div>
    </div>
  );
}

export default function App() {
  return (
    <div className="w-[1858px] h-[1390px] flex flex-col overflow-hidden bg-[#ececec] text-[#111] font-['Liberation_Serif','Noto_Sans_CJK_TC',serif]">
      <TitleBar />
      <MenuBar />
      <StandardBar />
      <FormatBar />
      <div className="h-[998px] shrink-0 flex bg-[#c0c0c0]">
        <LeftPane />
        <div className="w-[13px] shrink-0 flex border-l-[3px] border-white">
          <div className="w-[7px] bg-[#bcbcbc]" />
          <div className="w-[3px] bg-[#d0d0d0]" />
        </div>
        <SlideArea />
      </div>
      <DrawBar />
      <StatusBar />
      <Player />
      <div className="h-[4px] shrink-0 bg-[#d8d8d8]" />
    </div>
  );
}
